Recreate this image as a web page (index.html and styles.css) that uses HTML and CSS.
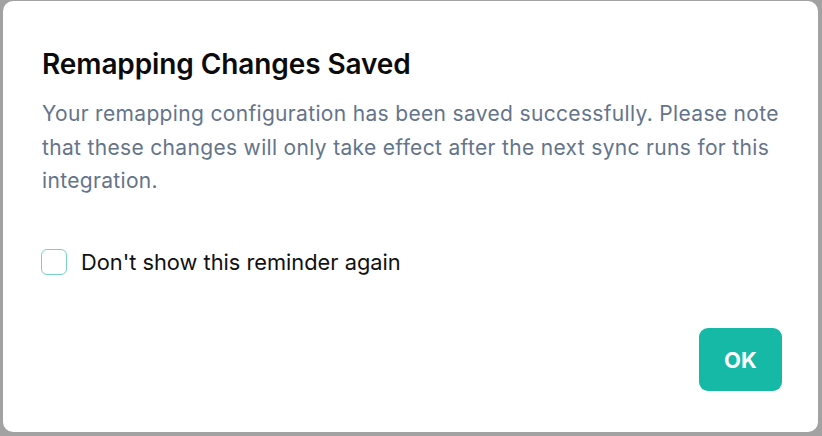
FILE: index.html
```html
<!DOCTYPE html>
<html lang="en">
<head>
<meta charset="utf-8">
<title>Remapping Changes Saved</title>
<link rel="stylesheet" href="styles.css">
</head>
<body>
<div class="backdrop">
  <div class="modal" role="dialog" aria-labelledby="modal-title">
    <h2 class="modal-title" id="modal-title">Remapping Changes Saved</h2>
    <p class="modal-text">Your remapping configuration has been saved successfully. Please note that these changes will only take effect after the next sync runs for this integration.</p>
    <label class="check-row">
      <span class="check-box"></span>
      <span class="check-label">Don't show this reminder again</span>
    </label>
    <div class="modal-footer">
      <button class="btn-ok" type="button">OK</button>
    </div>
  </div>
</div>
</body>
</html>
```

FILE: styles.css
```css
html, body {
  margin: 0;
  padding: 0;
  height: 100%;
}
body {
  background: #a2a2a2;
  font-family: Inter, "Noto Sans", "Liberation Sans", sans-serif;
}
.backdrop {
  height: 100%;
  box-sizing: border-box;
  padding: 1px 4px 4px 3px;
  display: flex;
}
.modal {
  flex: 1;
  background: #ffffff;
  border-radius: 10px;
  box-sizing: border-box;
  padding: 45px 36px 41px 39px;
  display: flex;
  flex-direction: column;
}
.modal-title {
  margin: 0;
  font-size: 28px;
  font-weight: 600;
  line-height: 36px;
  color: #0b0b0b;
  letter-spacing: -0.1px;
}
.modal-text {
  margin: 15px 0 0 0;
  font-size: 21px;
  letter-spacing: 0.33px;
  line-height: 33.5px;
  color: #64748b;
}
.check-row {
  margin-top: 51px;
  display: flex;
  align-items: center;
  gap: 14px;
  margin-left: -1px;
}
.check-box {
  width: 26px;
  height: 26px;
  box-sizing: border-box;
  border: 1.5px solid #76d2c6;
  border-radius: 6px;
  background: #fff;
}
.check-label {
  font-size: 21.8px;
  line-height: 26px;
  color: #111;
}
.modal-footer {
  margin-top: auto;
  display: flex;
  justify-content: flex-end;
}
.btn-ok {
  width: 83px;
  height: 63px;
  border: 0;
  border-radius: 9px;
  background: #16b8a6;
  color: #fff;
  font-family: inherit;
  font-size: 22px;
  font-weight: 700;
}
```
